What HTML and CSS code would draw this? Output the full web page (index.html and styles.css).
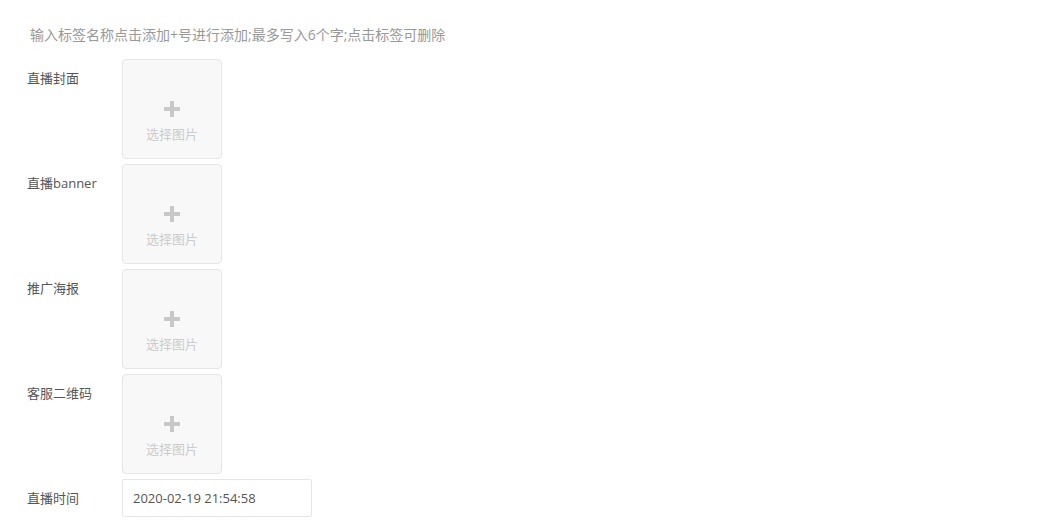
FILE: index.html
```html
<!DOCTYPE html>
<html lang="zh">
<head>
  <meta charset="UTF-8">
  <title>直播设置</title>
  <link rel="stylesheet" href="styles.css">
</head>
<body>
  <div class="form">
    <p class="hint">输入标签名称点击添加+号进行添加;最多写入6个字;点击标签可删除</p>

    <div class="row">
      <label>直播封面</label>
      <div class="upload">
        <span class="plus"></span>
        <span class="upload-text">选择图片</span>
      </div>
    </div>

    <div class="row">
      <label>直播banner</label>
      <div class="upload">
        <span class="plus"></span>
        <span class="upload-text">选择图片</span>
      </div>
    </div>

    <div class="row">
      <label>推广海报</label>
      <div class="upload">
        <span class="plus"></span>
        <span class="upload-text">选择图片</span>
      </div>
    </div>

    <div class="row">
      <label>客服二维码</label>
      <div class="upload">
        <span class="plus"></span>
        <span class="upload-text">选择图片</span>
      </div>
    </div>

    <div class="row row-time">
      <label>直播时间</label>
      <input type="text" class="time" value="2020-02-19 21:54:58">
    </div>
  </div>
</body>
</html>
```

FILE: styles.css
```css
body {
  margin: 0;
  font-family: "Open Sans", "Noto Sans CJK SC", sans-serif;
  font-size: 13px;
  color: #555;
  background: #fff;
}

.form {
  padding: 26px 0 0 27px;
}

.hint {
  margin: 0 0 15px 3px;
  color: #999;
  font-size: 14px;
  line-height: 18px;
}

.row {
  display: flex;
  margin-bottom: 5px;
}

label {
  width: 95px;
  padding-top: 10px;
  line-height: 18px;
}

.upload {
  width: 98px;
  height: 98px;
  border: 1px solid #e6e6e6;
  border-radius: 4px;
  background: #f8f8f8;
  display: flex;
  flex-direction: column;
  align-items: center;
}

.plus {
  position: relative;
  width: 16px;
  height: 16px;
  margin-top: 41px;
}

.plus::before,
.plus::after {
  content: "";
  position: absolute;
  background: #c8c8c8;
}

.plus::before {
  left: 0;
  top: 6px;
  width: 16px;
  height: 4px;
}

.plus::after {
  left: 6px;
  top: 0;
  width: 4px;
  height: 16px;
}

.upload-text {
  margin-top: 8px;
  color: #ccc;
  line-height: 18px;
}

.time {
  width: 190px;
  height: 38px;
  box-sizing: border-box;
  border: 1px solid #e6e6e6;
  border-radius: 2px;
  padding: 0 10px;
  font-family: "Open Sans", "Noto Sans CJK SC", sans-serif;
  font-size: 13px;
  color: #555;
}
```
